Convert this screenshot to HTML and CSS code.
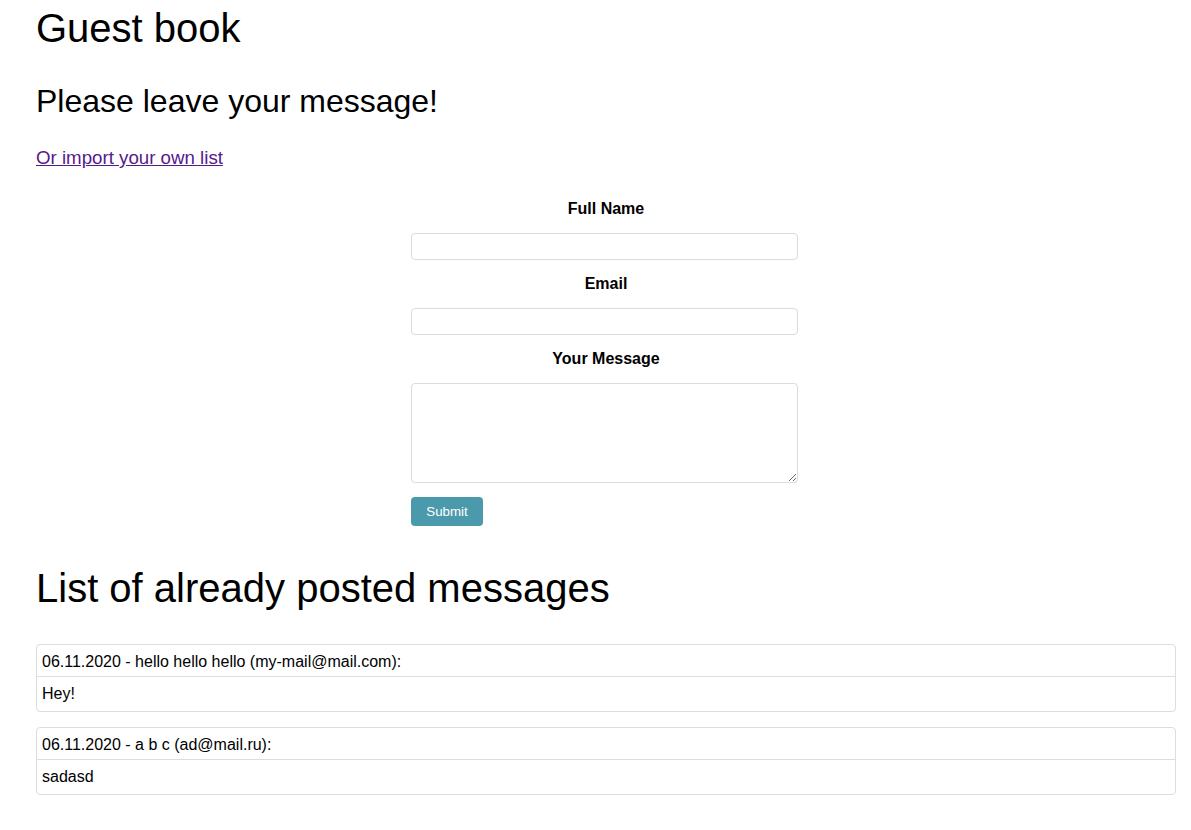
FILE: index.html
```html
<!DOCTYPE html>
<html lang="en">
<head>
<meta charset="utf-8">
<title>Guest book</title>
<link rel="stylesheet" href="styles.css">
</head>
<body>
<div class="page">
  <h1 class="title">Guest book</h1>
  <h2 class="subtitle">Please leave your message!</h2>
  <p class="import"><a href="#import" class="import-link">Or import your own list</a></p>

  <form class="guest-form">
    <label class="field-label" for="name">Full Name</label>
    <input class="field-input" id="name" type="text">
    <label class="field-label" for="email">Email</label>
    <input class="field-input" id="email" type="email">
    <label class="field-label" for="message">Your Message</label>
    <textarea class="field-area" id="message"></textarea>
    <div class="form-actions"><button type="button" class="submit-btn">Submit</button></div>
  </form>

  <h1 class="list-title">List of already posted messages</h1>

  <div class="messages">
    <div class="message">
      <div class="message-head">06.11.2020 - hello hello hello (my-mail@mail.com):</div>
      <div class="message-body">Hey!</div>
    </div>
    <div class="message">
      <div class="message-head">06.11.2020 - a b c (ad@mail.ru):</div>
      <div class="message-body">sadasd</div>
    </div>
  </div>
</div>
</body>
</html>
```

FILE: styles.css
```css
html, body {
  margin: 0;
  padding: 0;
  background: #ffffff;
}

body {
  font-family: "Liberation Sans", Arial, sans-serif;
  color: #000000;
}

.page {
  padding: 0 15px 0 36px;
  display: flex;
  flex-direction: column;
}

.title {
  font-size: 40px;
  font-weight: normal;
  line-height: 46px;
  margin: 5px 0 0;
}

.subtitle {
  font-size: 32px;
  font-weight: normal;
  line-height: 37px;
  margin: 32px 0 0;
}

.import {
  font-size: 18.7px;
  line-height: 21.5px;
  margin: 27px 0 0;
}

.import-link {
  color: #551a8b;
  text-decoration: underline;
}

.guest-form {
  display: flex;
  flex-direction: column;
  align-items: center;
  margin-top: 31px;
}

.field-label {
  font-size: 16px;
  font-weight: bold;
  line-height: 18.4px;
  text-align: center;
  margin-bottom: 15px;
}

.field-input,
.field-area {
  box-sizing: border-box;
  width: 387px;
  border: 1px solid #dcdcdc;
  border-radius: 4px;
  margin: 0 0 15px -3px;
  padding: 2px 6px;
  font-family: "Liberation Sans", Arial, sans-serif;
  font-size: 14px;
  background: #fff;
}

.field-input {
  height: 27px;
}

.field-area {
  height: 100px;
  resize: vertical;
  margin-top: -1px;
  margin-bottom: 14px;
}

.form-actions {
  width: 387px;
  margin-left: -3px;
}

.submit-btn {
  background: #4b9aab;
  color: #ffffff;
  border: none;
  border-radius: 4px;
  height: 29px;
  width: 72px;
  padding: 0;
  font-family: "Liberation Sans", Arial, sans-serif;
  font-size: 13.33px;
}

.list-title {
  font-size: 40px;
  font-weight: normal;
  line-height: 46px;
  margin: 39px 0 0;
}

.messages {
  display: flex;
  flex-direction: column;
  gap: 15px;
  margin-top: 33px;
}

.message {
  border: 1px solid #dddddd;
  border-radius: 4px;
  font-size: 16px;
  line-height: 18px;
}

.message-head {
  padding: 8px 5px 5px;
  border-bottom: 1px solid #dddddd;
}

.message-body {
  padding: 8px 5px 8px;
}
```
